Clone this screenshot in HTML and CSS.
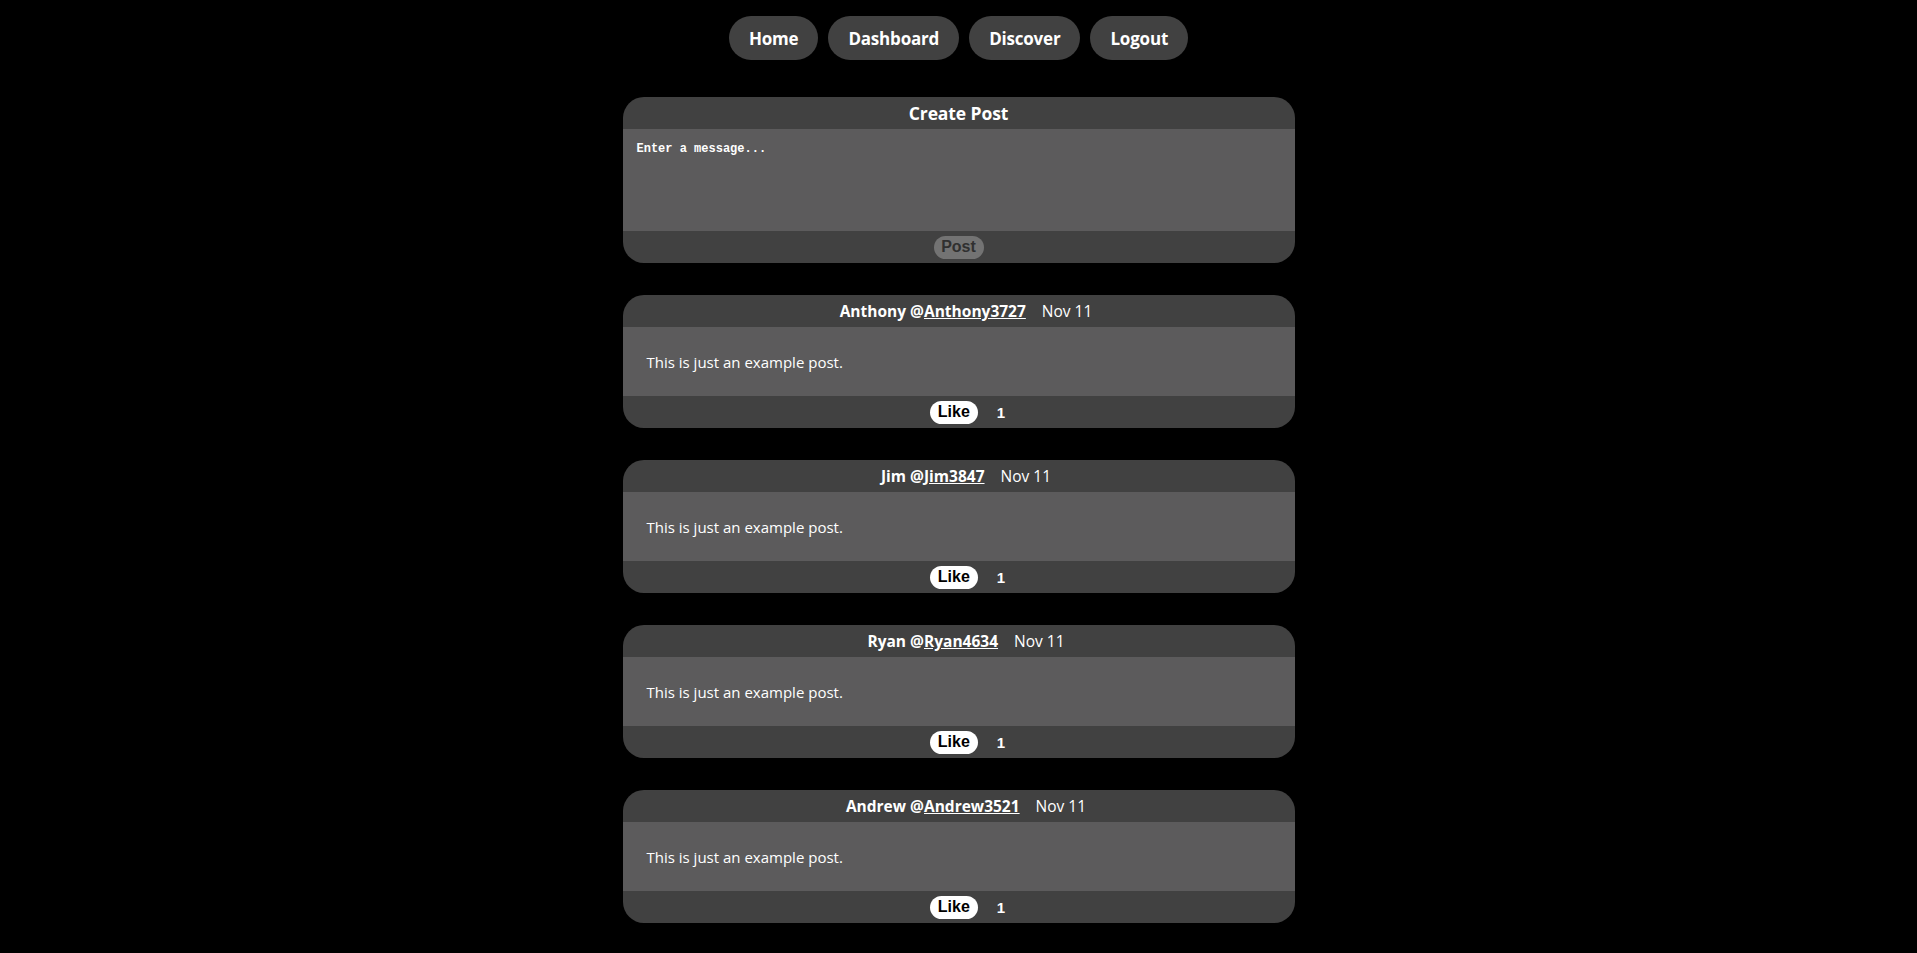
FILE: index.html
```html
<!DOCTYPE html>
<html lang="en">
<head>
<meta charset="utf-8">
<title>Feed</title>
<link rel="stylesheet" href="styles.css">
</head>
<body>
<nav class="nav">
  <a class="nav-btn" href="#">Home</a>
  <a class="nav-btn" href="#">Dashboard</a>
  <a class="nav-btn" href="#">Discover</a>
  <a class="nav-btn" href="#">Logout</a>
</nav>
<main class="feed">
  <section class="card create">
    <div class="card-head create-title">Create Post</div>
    <textarea class="msg" placeholder="Enter a message..."></textarea>
    <div class="card-foot"><button class="post-btn" disabled>Post</button></div>
  </section>

  <article class="card post">
    <div class="card-head post-head"><span class="author">Anthony @<a href="#" class="handle">Anthony3727</a></span><span class="date">Nov 11</span></div>
    <div class="post-body">This is just an example post.</div>
    <div class="card-foot"><button class="like-btn">Like</button><span class="count">1</span></div>
  </article>

  <article class="card post">
    <div class="card-head post-head"><span class="author">Jim @<a href="#" class="handle">Jim3847</a></span><span class="date">Nov 11</span></div>
    <div class="post-body">This is just an example post.</div>
    <div class="card-foot"><button class="like-btn">Like</button><span class="count">1</span></div>
  </article>

  <article class="card post">
    <div class="card-head post-head"><span class="author">Ryan @<a href="#" class="handle">Ryan4634</a></span><span class="date">Nov 11</span></div>
    <div class="post-body">This is just an example post.</div>
    <div class="card-foot"><button class="like-btn">Like</button><span class="count">1</span></div>
  </article>

  <article class="card post">
    <div class="card-head post-head"><span class="author">Andrew @<a href="#" class="handle">Andrew3521</a></span><span class="date">Nov 11</span></div>
    <div class="post-body">This is just an example post.</div>
    <div class="card-foot"><button class="like-btn">Like</button><span class="count">1</span></div>
  </article>
</main>
</body>
</html>
```

FILE: styles.css
```css
html, body {
  margin: 0;
  padding: 0;
  background: #000;
  color: #fff;
  font-family: "Open Sans", "Noto Sans", sans-serif;
}

.nav {
  display: flex;
  justify-content: center;
  gap: 10px;
  padding-top: 16px;
}

.nav-btn {
  display: flex;
  align-items: center;
  height: 44px;
  padding: 0 20px;
  border-radius: 22px;
  background: #414141;
  color: #fff;
  text-decoration: none;
  font-weight: 700;
  font-size: 17px;
  letter-spacing: -0.2px;
}

.feed {
  width: 672px;
  margin: 37px auto 0;
  display: flex;
  flex-direction: column;
  gap: 32px;
}

.card {
  background: #414141;
  border-radius: 21px;
  overflow: hidden;
}

.card-head {
  height: 32px;
  display: flex;
  align-items: center;
  justify-content: center;
}

.create-title {
  font-weight: 700;
  font-size: 17.5px;
  letter-spacing: -0.1px;
}

.msg {
  display: block;
  width: 100%;
  height: 102px;
  box-sizing: border-box;
  margin: 0;
  border: none;
  outline: none;
  resize: none;
  background: #5c5b5c;
  color: #fff;
  padding: 13px 14px;
  font-family: "Liberation Mono", "DejaVu Sans Mono", monospace;
  font-size: 12px;
  font-weight: 700;
}

.msg::placeholder {
  color: #fff;
  opacity: 1;
}

.card-foot {
  height: 32px;
  display: flex;
  align-items: center;
  justify-content: center;
}

.post-btn {
  width: 50px;
  height: 23px;
  padding: 0;
  border: none;
  border-radius: 12px;
  background: #737373;
  color: #303030;
  font-family: "Liberation Sans", Arial, sans-serif;
  font-weight: 700;
  font-size: 16px;
}

.post-head {
  font-size: 15.5px;
}

.author {
  font-weight: 700;
  padding-left: 15px;
}

.handle {
  color: #fff;
  text-decoration: underline;
}

.date {
  margin-left: 16px;
}

.post-body {
  height: 69px;
  box-sizing: border-box;
  padding: 0 24px;
  display: flex;
  align-items: center;
  background: #5c5b5c;
  font-size: 15px;
}

.like-btn {
  width: 48px;
  height: 23px;
  padding: 0;
  border: none;
  border-radius: 12px;
  background: #fff;
  color: #000;
  font-family: "Liberation Sans", Arial, sans-serif;
  font-weight: 700;
  font-size: 16px;
}

.count {
  margin-left: 19px;
  margin-right: -18px;
  font-family: "Liberation Sans", Arial, sans-serif;
  font-weight: 700;
  font-size: 15px;
}
```
